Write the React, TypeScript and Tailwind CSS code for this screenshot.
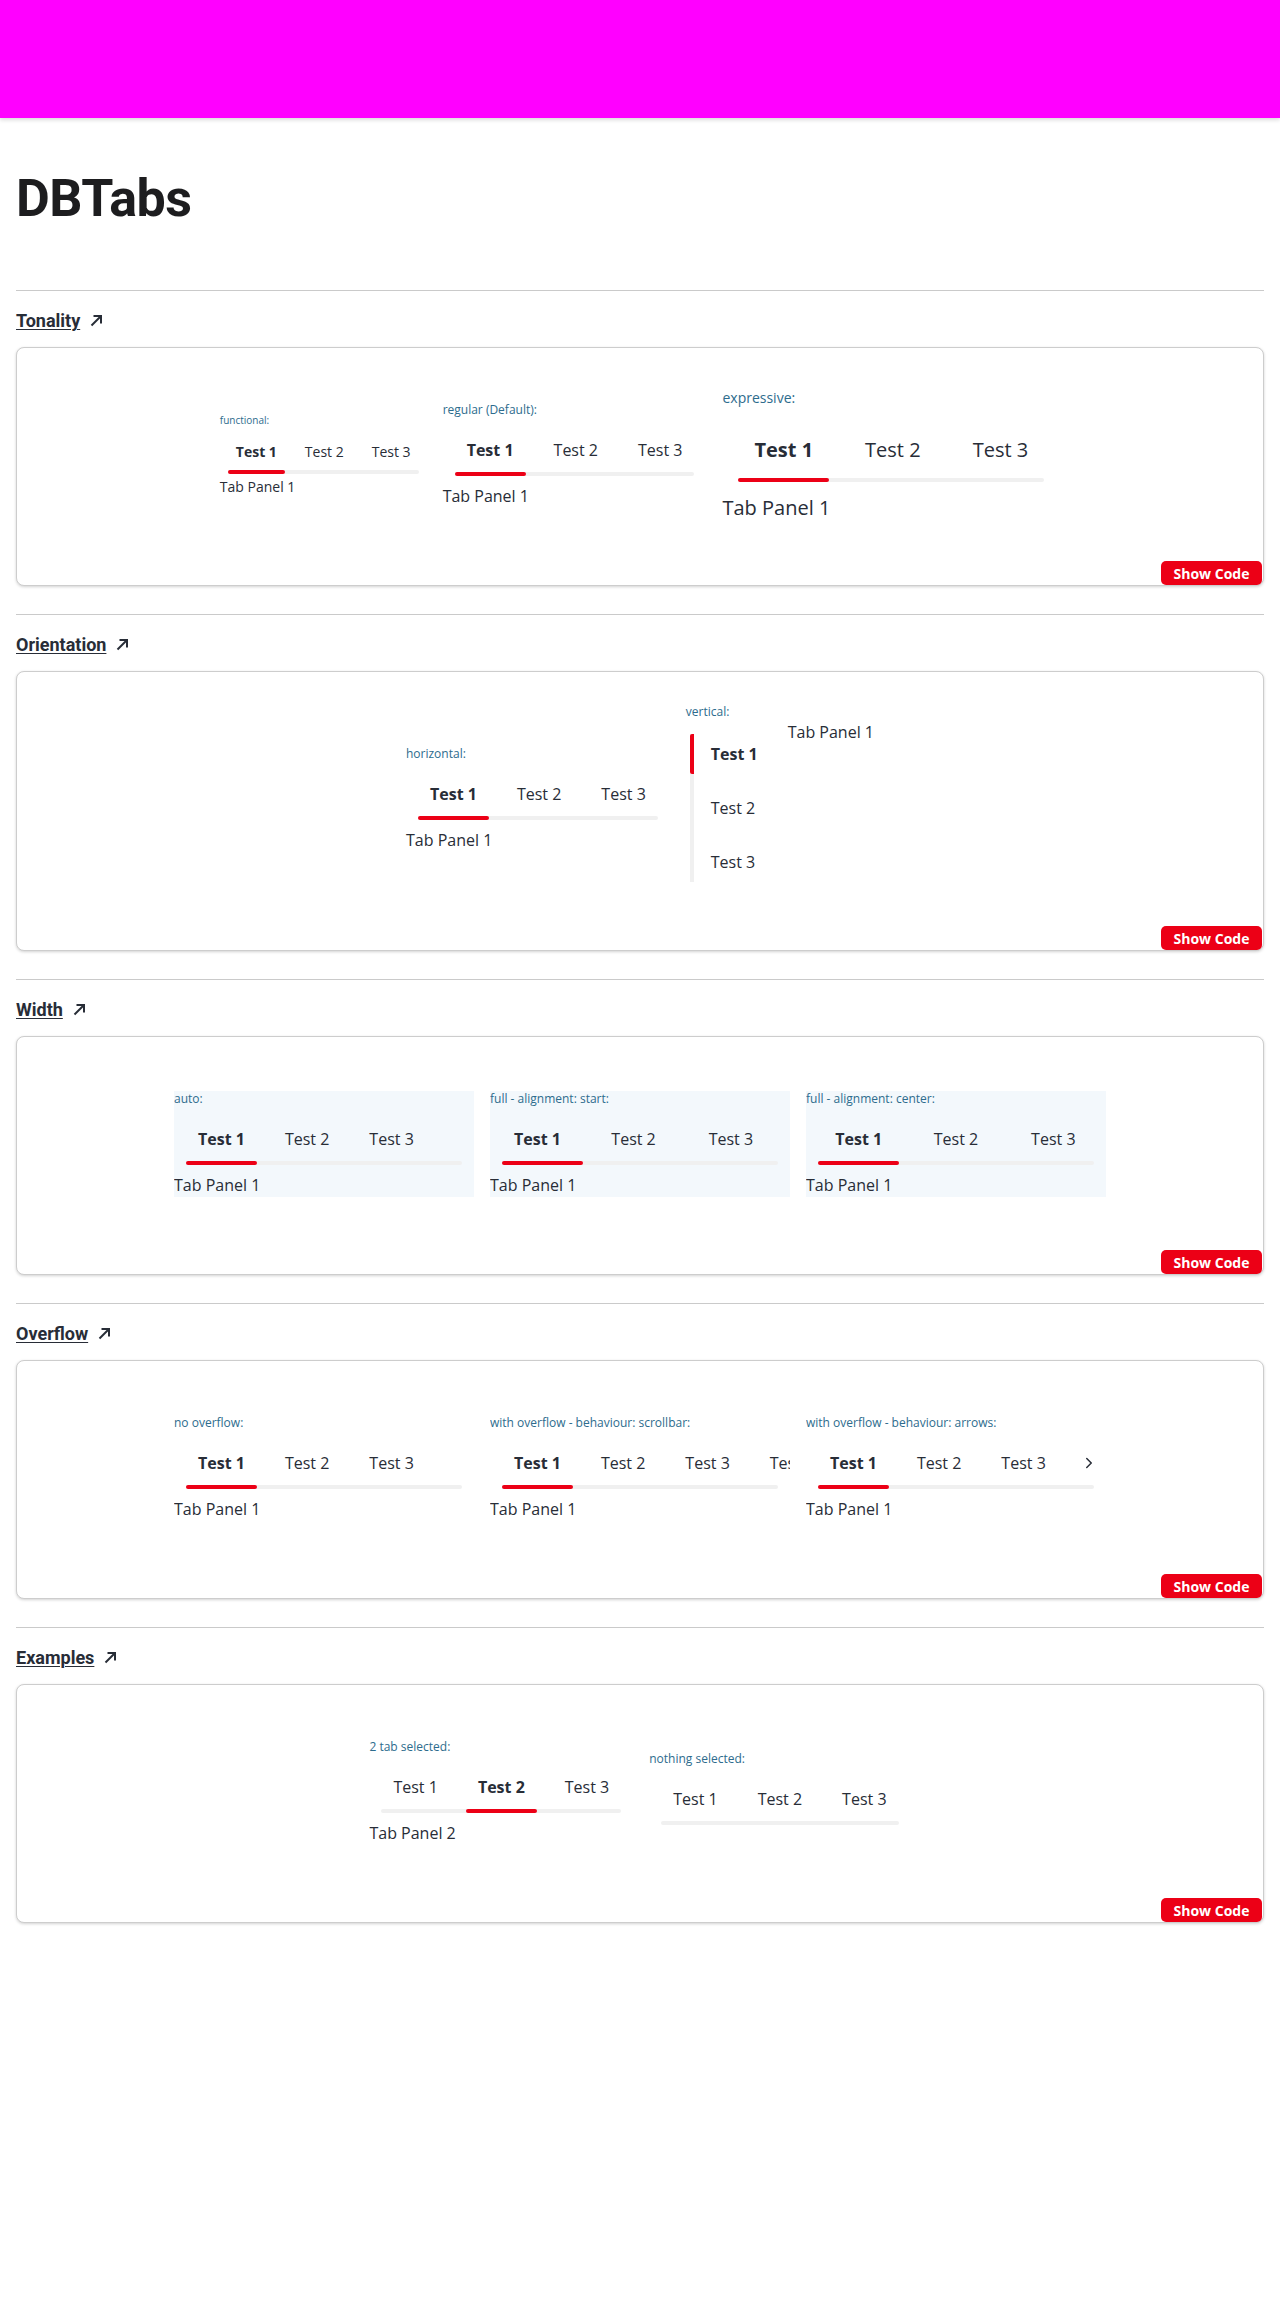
import React from "react";
import { ChevronRight } from "lucide-react";

type Tonality = "functional" | "regular" | "expressive";
type Width = "auto" | "stretch" | "full-start" | "full-center";
type Overflow = "none" | "scroll" | "arrows";

const sizes = {
  functional: {
    label: "text-[10px] leading-[14px]",
    list: "px-2 pt-2 pb-[3px]",
    gap: "gap-3",
    tab: "h-[34px] px-2 text-[14px]",
    bar: "mt-px",
    panel: "text-[14px] leading-5",
  },
  regular: {
    label: "text-[12px] leading-4",
    list: "px-3 pt-3 pb-2",
    gap: "gap-4",
    tab: "h-10 px-3 text-[16px]",
    bar: "mt-[2px]",
    panel: "text-[16px] leading-6",
  },
  expressive: {
    label: "text-[14px] leading-5",
    list: "px-4 pt-4 pb-3",
    gap: "gap-5",
    tab: "h-[52px] px-4 text-[20px]",
    bar: "mt-[2px]",
    panel: "text-[20px] leading-7",
  },
};

type TabsProps = {
  label: string;
  tonality?: Tonality;
  tabs?: string[];
  active?: number | null;
  panel?: string;
  width?: Width;
  overflow?: Overflow;
  boxed?: boolean;
};

const Tabs: React.FC<TabsProps> = ({
  label,
  tonality = "regular",
  tabs = ["Test 1", "Test 2", "Test 3"],
  active = 0,
  panel,
  width = "auto",
  overflow = "none",
  boxed = false,
}) => {
  const s = sizes[tonality];
  const fixed = width !== "auto";
  const full = width === "full-start" || width === "full-center";

  return (
    <div
      className={`flex flex-col ${fixed ? "w-[300px] overflow-hidden" : ""} ${boxed ? "bg-[#f3f8fc]" : ""}`}
    >
      <span className={`${s.label} text-[#2d6c8d]`}>{label}</span>
      <div className={s.list}>
        <div className="relative">
          <div className="absolute bottom-0 left-0 right-0 h-1 rounded-full bg-[#f0f0f0]" />
          <div className={`relative flex ${s.gap}`}>
            {tabs.map((t, i) => (
              <div key={t} className={`flex flex-col ${full ? "flex-1" : "shrink-0"}`}>
                <div
                  className={`flex items-center whitespace-nowrap text-[#282d37] ${s.tab} ${
                    width === "full-center" ? "justify-center" : ""
                  } ${active === i ? "font-bold" : ""}`}
                >
                  {t}
                </div>
                <div className={`h-1 rounded-full ${s.bar} ${active === i ? "bg-[#ec0016]" : ""}`} />
              </div>
            ))}
            {overflow === "arrows" && (
              <div className="ml-auto flex h-10 w-6 shrink-0 items-center justify-end text-[#282d37]">
                <ChevronRight size={18} strokeWidth={2} />
              </div>
            )}
          </div>
        </div>
      </div>
      {panel && <div className={`${s.panel} text-[#282d37]`}>{panel}</div>}
    </div>
  );
};

const VerticalTabs: React.FC = () => (
  <div className="flex flex-col">
    <span className="text-[12px] leading-4 text-[#2d6c8d]">vertical:</span>
    <div className="flex">
      <div className="pl-1 pt-[14px] pb-3 pr-[18px]">
        <div className="flex flex-col gap-[14px] border-l-4 border-[#f0f0f0]">
          {["Test 1", "Test 2", "Test 3"].map((t, i) => (
            <div
              key={t}
              className={`-ml-1 flex h-10 items-center rounded-l-[2px] border-l-4 pl-[17px] pr-3 text-[16px] text-[#282d37] ${
                i === 0 ? "border-[#ec0016] font-bold" : "border-transparent"
              }`}
            >
              {t}
            </div>
          ))}
        </div>
      </div>
      <div className="text-[16px] leading-6 text-[#282d37]">Tab Panel 1</div>
    </div>
  </div>
);

const ArrowUpRight = () => (
  <svg width="13" height="13" viewBox="0 0 13 13" fill="none" stroke="#282d37" strokeWidth="2">
    <path d="M1.5 11.5 11 2" />
    <path d="M3.5 2H11v7.5" />
  </svg>
);

const Section: React.FC<{ title: string; children: React.ReactNode }> = ({ title, children }) => (
  <section className="mt-[28px] border-t border-[#cacaca] pt-[17px] first:mt-0">
    <a className="flex h-6 items-center gap-[10px] font-['Roboto',sans-serif] text-[18px] font-bold text-[#282d37]">
      <span className="underline decoration-1 underline-offset-[2px]">{title}</span>
      <ArrowUpRight />
    </a>
    <div className="mt-[15px] flex flex-col rounded-lg border border-[#cdcdcd] bg-white shadow-[0_1px_3px_rgba(0,0,0,0.18)]">
      <div className="flex min-h-[213px] items-center justify-center gap-4 py-8">{children}</div>
      <div className="flex justify-end pr-px">
        <button
          type="button"
          className="h-6 w-[101px] rounded-[5px] bg-[#ec0016] font-['Open_Sans',sans-serif] text-[14px] font-bold text-white"
        >
          Show Code
        </button>
      </div>
    </div>
  </section>
);

const App: React.FC = () => {
  return (
    <div className="min-h-[2303px] bg-white font-['Open_Sans',sans-serif] text-[#282d37]">
      <header className="h-[118px] bg-[#ff00ff] shadow-[0_2px_4px_rgba(0,0,0,0.15)]" />
      <main className="px-4 pb-16">
        <h1 className="mt-[49px] font-['Roboto',sans-serif] text-[52px] font-bold leading-[64px] tracking-[-0.5px] text-[#1d1d1f]">
          DBTabs
        </h1>
        <div className="mt-[59px]">
          <Section title="Tonality">
            <Tabs label="functional:" tonality="functional" panel="Tab Panel 1" />
            <Tabs label="regular (Default):" tonality="regular" panel="Tab Panel 1" />
            <Tabs label="expressive:" tonality="expressive" panel="Tab Panel 1" />
          </Section>
          <Section title="Orientation">
            <Tabs label="horizontal:" panel="Tab Panel 1" />
            <VerticalTabs />
          </Section>
          <Section title="Width">
            <Tabs label="auto:" width="stretch" boxed panel="Tab Panel 1" />
            <Tabs label="full - alignment: start:" width="full-start" boxed panel="Tab Panel 1" />
            <Tabs label="full - alignment: center:" width="full-center" boxed panel="Tab Panel 1" />
          </Section>
          <Section title="Overflow">
            <Tabs label="no overflow:" width="stretch" panel="Tab Panel 1" />
            <Tabs
              label="with overflow - behaviour: scrollbar:"
              width="stretch"
              overflow="scroll"
              tabs={["Test 1", "Test 2", "Test 3", "Test 4"]}
              panel="Tab Panel 1"
            />
            <Tabs
              label="with overflow - behaviour: arrows:"
              width="stretch"
              overflow="arrows"
              panel="Tab Panel 1"
            />
          </Section>
          <Section title="Examples">
            <Tabs label="2 tab selected:" active={1} panel="Tab Panel 2" />
            <Tabs label="nothing selected:" active={null} />
          </Section>
        </div>
      </main>
    </div>
  );
};

export default App;
